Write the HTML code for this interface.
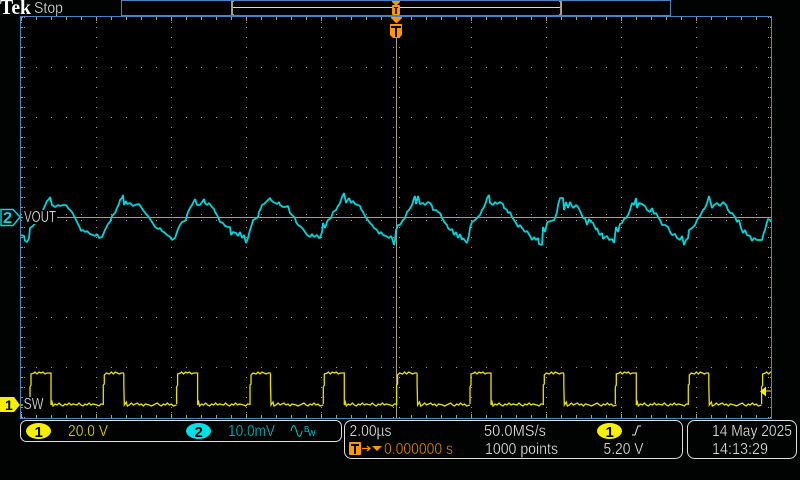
<!DOCTYPE html>
<html><head><meta charset="utf-8"><title>Tek Stop</title>
<style>
html,body{margin:0;padding:0;background:#000302;width:800px;height:480px;overflow:hidden}
svg{display:block}
text{font-family:"Liberation Sans",sans-serif;font-size:16px}
text.t{stroke:#000;stroke-width:.35px}
</style></head><body>
<svg width="800" height="480" viewBox="0 0 800 480" xmlns="http://www.w3.org/2000/svg">
<defs>
<pattern id="vd" patternUnits="userSpaceOnUse" x="21" y="17" width="75" height="10"><rect width="1" height="1" fill="#a89f80"/></pattern>
<pattern id="hd" patternUnits="userSpaceOnUse" x="21" y="17" width="15" height="50"><rect width="1" height="1" fill="#a89f80"/></pattern>
<pattern id="tk" patternUnits="userSpaceOnUse" x="21" y="0" width="15" height="10"><rect width="1" height="10" fill="#a89f80"/></pattern>
<pattern id="tm" patternUnits="userSpaceOnUse" x="21" y="0" width="75" height="2"><rect width="1" height="1" fill="#a89f80"/></pattern>
<pattern id="lk" patternUnits="userSpaceOnUse" x="0" y="17" width="2" height="10"><rect width="1" height="1" fill="#a89f80"/></pattern>
<pattern id="cr" patternUnits="userSpaceOnUse" x="21" y="214" width="15" height="6"><rect width="1" height="1" fill="#a89f80"/></pattern>
<pattern id="cv" patternUnits="userSpaceOnUse" x="393" y="17" width="6" height="10"><rect width="1" height="1" fill="#a89f80"/></pattern>
<clipPath id="cp"><rect x="21" y="17" width="750" height="401"/></clipPath>
<polyline id="ya" fill="none" stroke="#e8e000" stroke-width="1.3" points="0,404 0,387 1,385 1,374 4,373 5,372 7,374 9,372 11,373 13,372 15,374 17,373 21,373 21,405 22,402 23,406 25,404 27,405 29,403 31,405 33,406 35,404 37,405 39,403 41,405 43,404 47,405 49,403 51,405 53,406 55,404 57,405 59,403 61,405 63,404 67,405 69,406 71,404 73.3,404"/>
<polyline id="yb" fill="none" stroke="#e8e000" stroke-width="1.3" points="0,405 0,385 1,384 1,375 3,373 6,374 8,372 10,374 12,372 14,373 16,374 18,373 20,373 20.5,374 20.5,385 21,405 23,402 24,406 26,405 28,403 30,405 32,404 34,403 36,405 38,404 40,406 42,404 46,405 48,406 50,405 52,404 54,403 56,405 58,406 60,404 62,405 64,403 66,405 68,404 70,406 73.3,405"/>
</defs>
<rect width="800" height="480" fill="#000302"/>
<rect x="21" y="17" width="750" height="401" fill="#000"/>
<!-- graticule -->
<rect x="21" y="17" width="750" height="401" fill="url(#vd)"/>
<rect x="21" y="17" width="750" height="401" fill="url(#hd)"/>
<rect x="21" y="18" width="750" height="2" fill="url(#tk)"/>
<rect x="21" y="415" width="750" height="2" fill="url(#tk)"/>
<rect x="21" y="18" width="750" height="5" fill="url(#tm)"/>
<rect x="21" y="412" width="750" height="5" fill="url(#tm)"/>
<rect x="22" y="17" width="4" height="401" fill="url(#lk)"/>
<rect x="767" y="17" width="4" height="401" fill="url(#lk)"/>
<rect x="21" y="214" width="750" height="7" fill="url(#cr)"/>
<rect x="393" y="17" width="7" height="401" fill="url(#cv)"/>
<!-- reference lines -->
<rect x="57" y="217" width="714" height="1" fill="#a89f80"/>
<rect x="396" y="38" width="1" height="380" fill="#a89f80"/>
<!-- CH2 trace -->
<polyline clip-path="url(#cp)" fill="none" stroke="#00d4dc" stroke-width="1.8" stroke-linejoin="bevel" points="21,235 24,236 25,241 27,242 29,238 30,228 33,226 38,219 44,208 47,201 49,199 50,197 52,205 55,207 58,205 60,206 63,205 66,205 68,208 70,210 72,212 75,218 77,222 80,228 81,231 83,230 85,232 87,231 90,234 93,235 95,236 97,234 99,238 102,237 105,230 108,224 110,222 112,216 115,213 117,208 119,204 120,200 122,198 123,195 124,205 126,201 127,204 130,203 133,206 135,205 139,204 141,207 143,210 146,214 148,216 150,219 152,222 155,227 158,229 160,228 162,231 165,233 167,235 170,237 172,240 175,238 178,229 180,225 182,222 185,221 186,219 188,212 190,208 192,205 193,203 195,199 197,205 200,205 202,202 204,199 205,203 207,205 209,203 212,207 214,209 215,212 217,215 218,217 220,222 223,223 225,226 228,227 230,227 231,235 233,232 236,233 238,236 240,232 242,238 244,235 246,243 248,238 250,230 252,224 253,220 255,219 258,217 259,212 261,208 262,205 264,204 267,201 270,198 271,200 273,202 275,203 277,204 279,202 280,205 283,207 285,207 288,206 290,213 292,215 295,218 296,222 298,225 301,227 303,229 305,232 307,235 310,237 312,234 314,237 317,235 319,238 320,238 322,232 323,223 325,228 327,222 328,220 331,218 333,212 336,210 338,206 340,203 342,197 344,193 346,203 347,201 349,198 351,203 353,201 355,204 358,205 360,206 361,209 363,212 365,216 367,219 370,223 372,225 374,228 377,230 379,234 381,232 383,235 386,236 389,238 391,236 392,238 394,245 395,240 396,230 398,225 400,225 403,220 405,218 407,212 409,210 412,205 414,198 415,196 416,204 418,196 420,204 423,203 425,205 428,202 430,203 432,206 433,210 436,210 438,212 440,213 442,218 445,223 447,225 448,228 450,230 452,229 454,235 456,232 458,238 460,234 462,240 463,238 466,242 467,243 469,235 470,228 472,222 475,220 477,218 480,215 482,210 484,207 486,202 487,198 489,195 490,203 493,205 495,202 497,204 500,202 503,204 504,208 507,210 508,213 510,212 512,217 514,220 516,223 518,227 520,225 522,228 525,232 527,231 530,236 532,240 534,237 536,240 538,238 539,244 542,245 543,227 545,232 547,223 548,222 551,221 554,220 555,218 557,212 558,205 560,198 563,198 564,210 566,202 568,208 570,202 573,208 576,205 578,207 581,213 583,218 585,218 587,225 589,219 591,222 593,223 596,230 597,228 599,234 600,235 602,233 603,239 605,237 607,236 609,240 612,239 614,243 615,235 616,227 618,232 620,224 622,223 624,219 626,218 628,215 630,210 632,203 634,205 636,198 637,208 639,203 642,204 645,206 647,210 650,212 652,208 654,214 656,213 658,217 660,220 662,225 665,225 668,227 670,232 672,235 675,234 677,238 680,240 682,236 684,245 686,240 688,238 689,230 692,228 695,225 697,220 700,216 703,210 705,208 707,203 709,196 711,204 712,208 714,205 717,203 720,206 723,202 726,205 728,210 730,213 732,213 735,217 737,222 739,220 741,228 743,233 745,230 747,235 750,236 752,241 754,238 757,240 760,240 762,240 764,232 765,230 767,222 768,219 770,220 771,222"/>
<!-- CH1 trace -->
<g clip-path="url(#cp)">
<polyline fill="none" stroke="#e8e000" stroke-width="1.3" points="21,405 30,405"/>
<use href="#ya" x="30" y="0"/><use href="#yb" x="103.3" y="0"/><use href="#ya" x="176.6" y="0"/><use href="#yb" x="250" y="0"/><use href="#ya" x="323.3" y="0"/><use href="#yb" x="396.6" y="0"/><use href="#ya" x="470" y="0"/><use href="#yb" x="543.3" y="0"/><use href="#ya" x="615.3" y="0"/><use href="#yb" x="688.3" y="0"/><use href="#ya" x="761.6" y="0"/>
</g>
<!-- labels -->
<rect x="23" y="210" width="34" height="14" fill="#000"/>
<text class="t" x="24" y="222" textLength="32" lengthAdjust="spacingAndGlyphs" fill="#f0f0f0">VOUT</text>
<rect x="23" y="397" width="21" height="14" fill="#000"/>
<text class="t" x="23.5" y="409" textLength="20" lengthAdjust="spacingAndGlyphs" fill="#f0f0f0">SW</text>
<!-- frame -->
<g shape-rendering="crispEdges" fill="#4c82bd">
<rect x="20" y="16" width="752" height="1"/>
<rect x="20" y="16" width="1" height="403"/>
<rect x="771" y="16" width="1" height="403"/>
<rect x="20" y="418" width="752" height="1"/>
<rect x="121" y="0" width="550" height="1"/>
<rect x="121" y="15" width="550" height="1"/>
<rect x="121" y="0" width="1" height="16"/>
<rect x="670" y="0" width="1" height="16"/>
</g>
<rect x="122" y="1" width="548" height="14" fill="#000"/>
<rect x="233" y="7" width="327" height="1" fill="#f5f000"/>
<path d="M231 1h3v1h-1v12h1v1h-3zM562 1h-3v1h1v12h-1v1h3z" fill="#a89f80"/>
<!-- small trigger marker -->
<path d="M392 1h8v1l-3 3h-2l-3-3z" fill="#ff9800"/>
<rect x="392" y="5" width="8" height="10" rx="1" fill="#ff9800"/>
<path d="M394 7h4v1h-1.2v6h-1.6v-6h-1.2z" fill="#000"/>
<!-- big trigger marker -->
<path d="M391 17h11v1l-5 5h-1l-5-5z" fill="#ff9800"/>
<path d="M390 24h12v11l-3 3h-6l-3-3z" fill="#ff9800"/>
<path d="M391 26h10v2h-4v9h-2v-9h-4z" fill="#000"/>
<!-- header -->
<text x="0" y="14" textLength="31" lengthAdjust="spacingAndGlyphs" style="font-family:'Liberation Serif',serif;font-weight:bold;font-size:21px" fill="#fff">Tek</text>
<text class="t" x="34" y="13" textLength="29" lengthAdjust="spacingAndGlyphs" fill="#e8e8e8">Stop</text>
<!-- channel markers -->
<path d="M1 209.5h12l7 7.5-7 8.5h-12z" fill="#000" stroke="#00d8e0" stroke-width="1.4"/>
<text x="3" y="223" style="font-size:16px;font-weight:bold" fill="#00d8e0" textLength="9" lengthAdjust="spacingAndGlyphs">2</text>
<path d="M0 397h14l6 8-6 7h-14z" fill="#f5f000"/>
<text x="5" y="410" style="font-size:14px;font-weight:bold" fill="#000">1</text>
<!-- trigger level arrow -->
<path d="M760 391.5l6-5v4h5v1h-5v5z" fill="#f5f000"/>
<!-- bottom boxes -->
<g fill="#000302" stroke="#e0e0e0" stroke-width="1">
<rect x="20.5" y="420.5" width="321" height="21" rx="6"/>
<rect x="344.5" y="420.5" width="338" height="38" rx="7"/>
<rect x="687.5" y="420.5" width="109" height="38" rx="7"/>
</g>
<ellipse cx="38.5" cy="431" rx="12.5" ry="8" fill="#f5f000"/>
<text x="34.5" y="437" style="font-size:15px;font-weight:bold" fill="#000">1</text>
<text class="t" x="68" y="436" textLength="40" lengthAdjust="spacingAndGlyphs" fill="#f0e800">20.0 V</text>
<ellipse cx="198.5" cy="431" rx="12.5" ry="8" fill="#00e0e6"/>
<text x="194.5" y="437" style="font-size:15px;font-weight:bold" fill="#000">2</text>
<text class="t" x="228" y="436" textLength="47" lengthAdjust="spacingAndGlyphs" fill="#00c8d4">10.0mV</text>
<path d="M291 431Q293.5 420 296.5 431T302 431" fill="none" stroke="#00c8d4" stroke-width="1"/>
<text x="304" y="432" style="font-size:8px" fill="#00c8d4">B</text>
<text x="308" y="436" style="font-size:8px" fill="#00c8d4">W</text>
<text class="t" x="349.5" y="436" textLength="42" lengthAdjust="spacingAndGlyphs" fill="#f0f0f0">2.00µs</text>
<text class="t" x="484" y="436" textLength="62" lengthAdjust="spacingAndGlyphs" fill="#f0f0f0">50.0MS/s</text>
<ellipse cx="609.5" cy="431" rx="12.5" ry="8" fill="#f5f000"/>
<text x="605.5" y="437" style="font-size:15px;font-weight:bold" fill="#000">1</text>
<path d="M632 435h3l3-9h3" fill="none" stroke="#e8e8e8" stroke-width="1"/>
<rect x="349" y="442" width="12" height="13" rx="1" fill="#ff9800"/>
<path d="M351 444h8v2h-3v8h-2v-8h-3z" fill="#000"/>
<path d="M362 448.5h7M367 446l3 2.5-3 2.5" fill="none" stroke="#ff9800" stroke-width="1.2"/>
<path d="M372 446h10l-5 5z" fill="#ff9800"/>
<text class="t" x="384" y="454" textLength="69" lengthAdjust="spacingAndGlyphs" fill="#e88a00">0.000000 s</text>
<text class="t" x="485" y="454" textLength="73" lengthAdjust="spacingAndGlyphs" fill="#f0f0f0">1000 points</text>
<text class="t" x="603.5" y="454" textLength="40" lengthAdjust="spacingAndGlyphs" fill="#f0f0f0">5.20 V</text>
<text class="t" x="712" y="436" textLength="80" lengthAdjust="spacingAndGlyphs" fill="#f0f0f0">14 May 2025</text>
<text class="t" x="712" y="454" textLength="56" lengthAdjust="spacingAndGlyphs" fill="#f0f0f0">14:13:29</text>
</svg>
</body></html>
